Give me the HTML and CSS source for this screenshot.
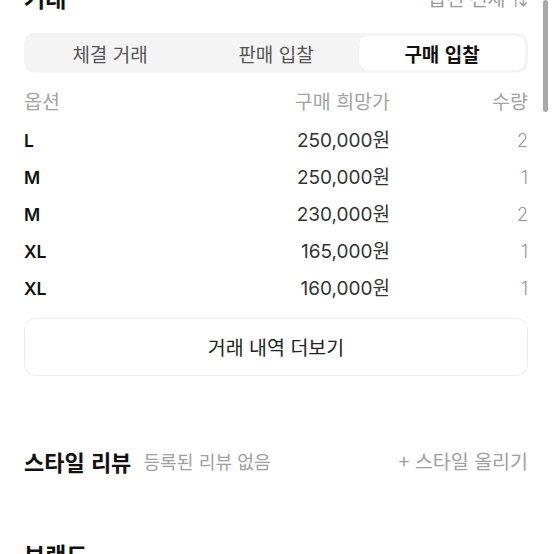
FILE: index.html
```html
<!DOCTYPE html>
<html lang="ko">
<head>
<meta charset="utf-8">
<link rel="stylesheet" href="styles.css">
</head>
<body>
<div class="page">
  <div class="sec-head">
    <h2 class="title">거래</h2>
    <span class="filter">옵션 전체 <span class="arrows">⇅</span></span>
  </div>
  <div class="seg">
    <div class="tab">체결 거래</div>
    <div class="tab">판매 입찰</div>
    <div class="tab active">구매 입찰</div>
  </div>
  <div class="table">
    <div class="row head"><span class="opt">옵션</span><span class="price">구매 희망가</span><span class="qty">수량</span></div>
    <div class="row"><span class="opt">L</span><span class="price">250,000원</span><span class="qty">2</span></div>
    <div class="row"><span class="opt">M</span><span class="price">250,000원</span><span class="qty">1</span></div>
    <div class="row"><span class="opt">M</span><span class="price">230,000원</span><span class="qty">2</span></div>
    <div class="row"><span class="opt">XL</span><span class="price">165,000원</span><span class="qty">1</span></div>
    <div class="row"><span class="opt">XL</span><span class="price">160,000원</span><span class="qty">1</span></div>
  </div>
  <div class="more">거래 내역 더보기</div>
  <div class="review">
    <div class="review-left"><span class="rtitle">스타일 리뷰</span><span class="rsub">등록된 리뷰 없음</span></div>
    <span class="upload">+ 스타일 올리기</span>
  </div>
  <h2 class="title brand">브랜드</h2>
</div>
<div class="scrollbar"></div>
</body>
</html>
```
FILE: styles.css
```css
html, body { margin: 0; padding: 0; background: #fff; }
body {
  font-family: "Noto Sans CJK KR", "Noto Sans", sans-serif;
  color: #222;
  overflow: hidden;
  height: 554px;
}
.page {
  padding: 0 26px 0 24px;
  margin-top: -21px;
}
.sec-head {
  display: flex;
  justify-content: space-between;
  align-items: center;
  height: 36px;
}
.title {
  margin: 0;
  font-size: 23px;
  font-weight: 700;
  color: #111;
  line-height: 36px;
}
.filter {
  font-size: 19.5px;
  color: #999;
}
.arrows { font-size: 17px; }
.seg {
  margin-top: 18px;
  background: #f4f4f4;
  border-radius: 11px;
  padding: 3px;
  display: grid;
  grid-template-columns: 1fr 1fr 1fr;
  height: 34px;
}
.tab {
  display: flex;
  align-items: center;
  justify-content: center;
  font-size: 19px;
  color: #555;
  border-radius: 9px;
  line-height: 1;
}
.tab.active {
  background: #fff;
  color: #111;
  font-weight: 700;
}
.table { margin-top: 11px; }
.row {
  display: flex;
  align-items: center;
  height: 37px;
  line-height: 24px;
}
.row .opt {
  flex: 1;
  font-family: "Inter", sans-serif;
  font-size: 17.5px;
  font-weight: 600;
  color: #111;
}
.row .price {
  text-align: right;
  color: #333;
  font-family: "Inter", "Noto Sans CJK KR", sans-serif;
  font-size: 19px;
}
.row .qty {
  width: 138px;
  text-align: right;
  color: #9a9a9a;
  font-family: "Inter", sans-serif;
  font-size: 18px;
  font-weight: 300;
}
.row.head { height: 38px; align-items: flex-start; padding-top: 0; }
.row.head .opt, .row.head .price, .row.head .qty {
  color: #a3a3a3;
  font-weight: 400;
  font-family: "Noto Sans CJK KR", sans-serif;
  font-size: 19.5px;
  line-height: 34px;
}
.more {
  margin-top: 11px;
  height: 56px;
  border: 1px solid #ececec;
  border-radius: 12px;
  display: flex;
  align-items: center;
  justify-content: center;
  font-size: 19.5px;
  color: #222;
  line-height: 1;
}
.review {
  margin-top: 70px;
  display: flex;
  justify-content: space-between;
  align-items: center;
  height: 30px;
  line-height: 1;
}
.review-left { display: flex; align-items: center; gap: 12px; }
.rtitle { font-size: 22px; font-weight: 700; color: #111; }
.rsub { font-size: 18.2px; color: #a0a0a0; }
.upload { font-size: 19.5px; color: #a0a0a0; }
.brand { margin-top: 60px; }
.scrollbar {
  position: absolute;
  top: 0;
  left: 543px;
  width: 5px;
  height: 112px;
  background: #a9a9a9;
  border-radius: 3px;
}
```
